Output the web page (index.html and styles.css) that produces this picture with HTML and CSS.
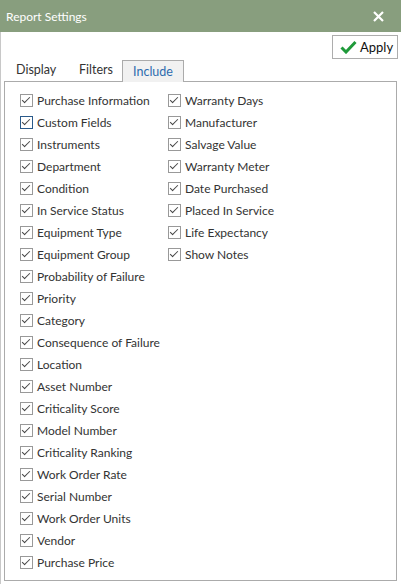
FILE: index.html
```html
<!DOCTYPE html>
<html>
<head>
<meta charset="utf-8">
<link rel="stylesheet" href="styles.css">
</head>
<body>
<div class="window">
  <div class="titlebar">
    <span class="title">Report Settings</span>
    <svg class="close" width="11" height="11" viewBox="0 0 11 11"><path d="M1 1L10 10M10 1L1 10" stroke="#fff" stroke-width="2.2"/></svg>
  </div>
  <div class="toolbar">
    <button class="apply"><svg width="17" height="14" viewBox="0 0 17 14"><path d="M1.5 7.5L6 12L15.5 2" fill="none" stroke="#1f9a3a" stroke-width="3"/></svg><span>Apply</span></button>
  </div>
  <div class="tabs">
    <span class="tab">Display</span>
    <span class="tab">Filters</span>
    <span class="tab active">Include</span>
  </div>
  <div class="panel">
    <div class="col col1">
      <label class="item"><span class="cb"></span>Purchase Information</label>
      <label class="item"><span class="cb focus"></span>Custom Fields</label>
      <label class="item"><span class="cb"></span>Instruments</label>
      <label class="item"><span class="cb"></span>Department</label>
      <label class="item"><span class="cb"></span>Condition</label>
      <label class="item"><span class="cb"></span>In Service Status</label>
      <label class="item"><span class="cb"></span>Equipment Type</label>
      <label class="item"><span class="cb"></span>Equipment Group</label>
      <label class="item"><span class="cb"></span>Probability of Failure</label>
      <label class="item"><span class="cb"></span>Priority</label>
      <label class="item"><span class="cb"></span>Category</label>
      <label class="item"><span class="cb"></span>Consequence of Failure</label>
      <label class="item"><span class="cb"></span>Location</label>
      <label class="item"><span class="cb"></span>Asset Number</label>
      <label class="item"><span class="cb"></span>Criticality Score</label>
      <label class="item"><span class="cb"></span>Model Number</label>
      <label class="item"><span class="cb"></span>Criticality Ranking</label>
      <label class="item"><span class="cb"></span>Work Order Rate</label>
      <label class="item"><span class="cb"></span>Serial Number</label>
      <label class="item"><span class="cb"></span>Work Order Units</label>
      <label class="item"><span class="cb"></span>Vendor</label>
      <label class="item"><span class="cb"></span>Purchase Price</label>
    </div>
    <div class="col col2">
      <label class="item"><span class="cb"></span>Warranty Days</label>
      <label class="item"><span class="cb"></span>Manufacturer</label>
      <label class="item"><span class="cb"></span>Salvage Value</label>
      <label class="item"><span class="cb"></span>Warranty Meter</label>
      <label class="item"><span class="cb"></span>Date Purchased</label>
      <label class="item"><span class="cb"></span>Placed In Service</label>
      <label class="item"><span class="cb"></span>Life Expectancy</label>
      <label class="item"><span class="cb"></span>Show Notes</label>
    </div>
  </div>
</div>
</body>
</html>
```

FILE: styles.css
```css
* { box-sizing: border-box; }
html, body { margin: 0; padding: 0; background: #fff; }
body {
  font-family: "Lato", "Noto Sans", sans-serif;
  font-size: 12px;
  color: #222;
  width: 401px;
  height: 584px;
  overflow: hidden;
}
.window {
  height: 584px;
  border-left: 1px solid #c8c8c8;
}
.titlebar {
  height: 32px;
  background: #889e7e;
  display: flex;
  align-items: center;
  justify-content: space-between;
  padding: 0 17px 0 6px;
  margin-left: -1px;
}
.title { color: #fff; font-size: 12px; }
.close { display: block; }
.toolbar {
  display: flex;
  justify-content: flex-end;
  padding: 3px 3px 0 0;
  height: 27px;
}
.apply {
  width: 66px;
  height: 24px;
  border: 1px solid #adadad;
  background: #fff;
  display: flex;
  align-items: center;
  gap: 3px;
  padding: 0 0 0 7px;
  font-family: inherit;
  font-size: 13px;
  color: #111;
}
.tabs {
  display: flex;
  height: 22px;
  padding-left: 15px;
  align-items: flex-end;
}
.tab {
  height: 22px;
  line-height: 22px;
  font-size: 12.5px;
  color: #333;
}
.tab:nth-child(1) { width: 63px; }
.tab:nth-child(2) { width: 43px; }
.tab.active {
  width: 62px;
  border: 1px solid #ababab;
  border-bottom: none;
  background: #f1f1f1;
  color: #2d6cae;
  text-align: center;
  position: relative;
  top: 1px;
}
.panel {
  margin-left: 3px;
  width: 393px;
  height: 500px;
  border: 1px solid #ababab;
  display: flex;
  padding: 7px 0 0 15px;
}
.col { display: flex; flex-direction: column; }
.col1 { width: 148px; }
.item {
  height: 22px;
  display: flex;
  align-items: center;
  white-space: nowrap;
  color: #333;
}
.cb {
  width: 13px;
  height: 13px;
  border: 1px solid #999;
  margin-right: 4px;
  position: relative;
  flex: none;
}
.cb::after {
  content: "";
  position: absolute;
  left: 3px;
  top: 0px;
  width: 3px;
  height: 7px;
  border: solid #444;
  border-width: 0 1.3px 1.3px 0;
  transform: rotate(45deg);
}
.cb.focus { border-color: #2a5a8a; }
```
